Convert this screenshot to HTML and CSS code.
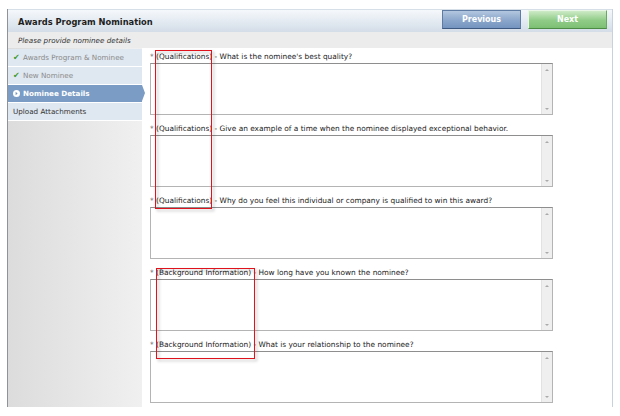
FILE: index.html
```html
<!DOCTYPE html>
<html>
<head>
<meta charset="utf-8">
<link rel="stylesheet" href="styles.css">
</head>
<body>
<div class="frame">
  <div class="header">
    <div class="title">Awards Program Nomination</div>
    <div class="buttons">
      <div class="btn prev">Previous</div>
      <div class="btn next">Next</div>
    </div>
  </div>
  <div class="subheader">Please provide nominee details</div>
  <div class="main">
    <div class="sidebar">
      <div class="item done"><span class="check">&#10004;</span>Awards Program &amp; Nominee</div>
      <div class="item done"><span class="check">&#10004;</span>New Nominee</div>
      <div class="item active"><span class="dot"><svg width="7" height="7" viewBox="0 0 7 7"><circle cx="3.5" cy="3.5" r="3.5" fill="#fff"/><path d="M2.6 1.8 L4.6 3.5 L2.6 5.2 Z" fill="#6f92bf"/></svg></span>Nominee Details</div>
      <div class="item">Upload Attachments</div>
    </div>
    <div class="content">
      <div class="q">
        <div class="label"><span class="star">*</span> (Qualifications) - What is the nominee's best quality?</div>
        <div class="box"><div class="area"></div><div class="sb"><span class="up"></span><span class="dn"></span></div></div>
      </div>
      <div class="q">
        <div class="label"><span class="star">*</span> (Qualifications) - Give an example of a time when the nominee displayed exceptional behavior.</div>
        <div class="box"><div class="area"></div><div class="sb"><span class="up"></span><span class="dn"></span></div></div>
      </div>
      <div class="q">
        <div class="label"><span class="star">*</span> (Qualifications) - Why do you feel this individual or company is qualified to win this award?</div>
        <div class="box"><div class="area"></div><div class="sb"><span class="up"></span><span class="dn"></span></div></div>
      </div>
      <div class="q">
        <div class="label"><span class="star">*</span> (Background Information) - How long have you known the nominee?</div>
        <div class="box"><div class="area"></div><div class="sb"><span class="up"></span><span class="dn"></span></div></div>
      </div>
      <div class="q">
        <div class="label"><span class="star">*</span> (Background Information) - What is your relationship to the nominee?</div>
        <div class="box"><div class="area"></div><div class="sb"><span class="up"></span><span class="dn"></span></div></div>
      </div>
      <div class="mark mark1"></div>
      <div class="mark mark2"></div>
    </div>
  </div>
</div>
</body>
</html>
```

FILE: styles.css
```css
html, body {
  margin: 0;
  padding: 0;
  background: #fff;
  font-family: "DejaVu Sans", Verdana, sans-serif;
  color: #222;
}
.frame {
  margin: 9px 0 0 7px;
  width: 604px;
  border-left: 1px solid #8f9398;
  border-right: 1px solid #c7d2de;
  height: 398px;
  display: flex;
  flex-direction: column;
}
.header {
  height: 23px;
  background: linear-gradient(#f5f8fb, #d3dde8);
  display: flex;
  align-items: center;
  justify-content: space-between;
  box-sizing: border-box;
  border-top: 1px solid #d6dee7;
}
.title {
  font-weight: bold;
  font-size: 8.3px;
  padding-left: 10px;
  color: #1e1e1e;
  padding-top: 1px;
}
.buttons {
  display: flex;
  gap: 7px;
  padding-right: 5px;
  align-self: flex-start;
}
.btn {
  width: 79px;
  height: 19px;
  box-sizing: border-box;
  color: #fff;
  font-weight: bold;
  font-size: 8px;
  display: flex;
  align-items: center;
  justify-content: center;
}
.prev {
  background: linear-gradient(#b3c7df, #8aa6cb 55%, #7494bf);
  border: 1px solid #5d7ba3;
  border-bottom-color: #3f5a80;
}
.next {
  background: linear-gradient(#cdeac7, #90cc87 55%, #7cbf73);
  border: 1px solid #6aa862;
  border-top-color: #e8f6e5;
  border-left-color: #e8f6e5;
  border-bottom-color: #4b8b44;
}
.subheader {
  height: 16px;
  background: #ececec;
  font-style: italic;
  font-size: 7.2px;
  color: #333;
  padding-left: 10px;
  display: flex;
  align-items: center;
}
.main {
  flex: 1;
  display: flex;
}
.sidebar {
  width: 134px;
  background: linear-gradient(to right, #dcdcdc, #f0f0f0);
  padding-top: 1px;
}
.item {
  height: 17px;
  background: #dfe7f0;
  border-bottom: 1px solid #fff;
  font-size: 7.2px;
  display: flex;
  align-items: center;
  padding-left: 5px;
  color: #333;
}
.item.done {
  color: #8a8a8a;
}
.check {
  color: #3a9a2a;
  font-size: 8px;
  width: 10px;
  display: inline-block;
}
.item.active {
  background: #7a9cc5;
  color: #fff;
  font-weight: bold;
  position: relative;
}
.item.active::after {
  content: "";
  position: absolute;
  right: -3px;
  top: 0;
  border-top: 8.5px solid transparent;
  border-bottom: 8.5px solid transparent;
  border-left: 3px solid #7a9cc5;
}
.dot {
  width: 10px;
  display: inline-flex;
  align-items: center;
}
.content {
  flex: 1;
  position: relative;
  padding-left: 8px;
}
.label {
  font-size: 7.4px;
  line-height: 10px;
  padding-top: 9px;
  padding-bottom: 1px;
  color: #222;
  white-space: nowrap;
}
.q:first-child .label {
  padding-top: 4px;
}
.star {
  color: #555;
}
.box {
  width: 403px;
  height: 52px;
  box-sizing: border-box;
  border: 1px solid #b4b4b4;
  border-top-color: #8e8e8e;
  display: flex;
  background: #fff;
}
.area {
  flex: 1;
}
.sb {
  width: 10px;
  background: #efefef;
  border-left: 1px solid #e2e2e2;
  display: flex;
  flex-direction: column;
  justify-content: space-between;
  align-items: center;
  padding: 5px 0 4px;
}
.up {
  width: 0;
  height: 0;
  border-left: 2px solid transparent;
  border-right: 2px solid transparent;
  border-bottom: 2px solid #aaa;
}
.dn {
  width: 0;
  height: 0;
  border-left: 2px solid transparent;
  border-right: 2px solid transparent;
  border-top: 2px solid #aaa;
}
.mark {
  position: absolute;
  border: 1.5px solid #e0121b;
  filter: drop-shadow(2px 2px 1.5px rgba(0,0,0,0.3));
}
.mark1 {
  left: 13px;
  top: 2px;
  width: 55px;
  height: 157px;
}
.mark2 {
  left: 14px;
  top: 220px;
  width: 97px;
  height: 89px;
}
```
